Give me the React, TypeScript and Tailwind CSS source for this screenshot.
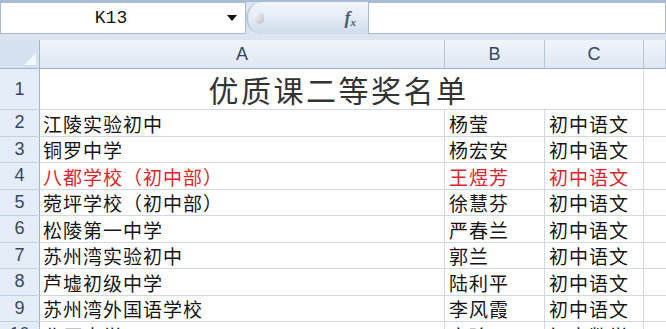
import React from 'react';

const cjk = { fontFamily: '"Noto Sans CJK SC", "Liberation Sans", sans-serif' };
const latin = { fontFamily: '"Liberation Sans", Arial, sans-serif' };

const rows = [
  { n: 2, school: '江陵实验初中', name: '杨莹', subject: '初中语文' },
  { n: 3, school: '铜罗中学', name: '杨宏安', subject: '初中语文' },
  { n: 4, school: '八都学校（初中部）', name: '王煜芳', subject: '初中语文', red: true },
  { n: 5, school: '菀坪学校（初中部）', name: '徐慧芬', subject: '初中语文' },
  { n: 6, school: '松陵第一中学', name: '严春兰', subject: '初中语文' },
  { n: 7, school: '苏州湾实验初中', name: '郭兰', subject: '初中语文' },
  { n: 8, school: '芦墟初级中学', name: '陆利平', subject: '初中语文' },
  { n: 9, school: '苏州湾外国语学校', name: '李风霞', subject: '初中语文' },
  { n: 10, school: '北厍中学', name: '宋玲', subject: '初中数学' },
];

const grid = 'grid grid-cols-[40px_405px_100px_99px_1fr]';

function FormulaBar() {
  return (
    <div className="h-[40px] bg-[#dbe5f1] border-t-2 border-[#a7bbd4]">
      <div className="flex h-[32px]">
        <div className="w-[246px] bg-white border border-[#aab9cc] flex items-center relative">
          <span className="flex-1 text-center text-[18px] text-[#111] pr-[6px]" style={{ fontFamily: '"Liberation Mono", "DejaVu Sans Mono", monospace' }}>
            K13
          </span>
          <svg width="10" height="6" viewBox="0 0 10 6" className="mr-[8px]">
            <path d="M0 0 L10 0 L5 6 Z" fill="#111" />
          </svg>
        </div>
        <div className="w-[122px] flex items-center bg-gradient-to-b from-[#f4f7fb] via-[#e3ebf5] to-[#cfdcec] rounded-l-[16px] border-l-2 border-[#b9c7d8]">
          <div className="w-[10px] h-[12px] ml-[6px] rounded-full bg-gradient-to-br from-[#ffffff] to-[#b8bcc4]" />
          <span className="ml-auto mr-[12px] text-[18px] italic text-[#4a5a70] font-semibold" style={{ fontFamily: '"Liberation Serif", serif' }}>
            f<sub className="text-[11px]">x</sub>
          </span>
        </div>
        <div className="flex-1 bg-white border border-[#aab9cc]" />
      </div>
    </div>
  );
}

function Header() {
  const cell = 'h-[28px] flex items-center justify-center border-r border-[#b6c6da] text-[18px] text-[#35475e] bg-gradient-to-b from-[#f1f5fa] to-[#dfe7f2]';
  return (
    <div className={`${grid} border-b border-[#9fb4cd]`} style={latin}>
      <div className="h-[28px] bg-[#d6e1ef] border-r border-[#9fb4cd] flex items-end justify-end p-[3px]">
        <svg width="12" height="12" viewBox="0 0 12 12">
          <path d="M12 0 L12 12 L0 12 Z" fill="#f3f6fa" />
        </svg>
      </div>
      <div className={cell}>A</div>
      <div className={cell}>B</div>
      <div className={cell}>C</div>
      <div className={cell} />
    </div>
  );
}

function RowNum({ n, h }: { n: number; h: string }) {
  return (
    <div className={`${h} flex items-center justify-center bg-[#e4ecf7] border-r border-b border-r-[#9fb4cd] border-b-[#c3d1e2] text-[18px] text-[#35475e]`} style={latin}>
      {n}
    </div>
  );
}

export default function App() {
  return (
    <div className="w-[666px] h-[329px] overflow-hidden bg-white">
      <FormulaBar />
      <Header />
      <div className={grid}>
        <RowNum n={1} h="h-[41px]" />
        <div className="col-span-3 h-[41px] flex items-center justify-center border-r border-b border-[#d0d7e5] text-[30px] text-[#333] tracking-[2.5px] pr-[6px]" style={cjk}>
          优质课二等奖名单
        </div>
        <div className="h-[41px] border-b border-[#d0d7e5]" />
        {rows.map((r) => {
          const color = r.red ? 'text-[#d8262b]' : 'text-[#151515]';
          const cell = `h-[26.5px] flex items-end pb-[1px] border-r border-b border-[#d0d7e5] text-[19px] leading-[22px] tracking-[1px] whitespace-nowrap overflow-hidden ${color}`;
          return (
            <React.Fragment key={r.n}>
              <RowNum n={r.n} h="h-[26.5px]" />
              <div className={`${cell} pl-[3px]`} style={cjk}>{r.school}</div>
              <div className={`${cell} pl-[4px]`} style={cjk}>{r.name}</div>
              <div className={`${cell} pl-[4px]`} style={cjk}>{r.subject}</div>
              <div className="h-[26.5px] border-b border-[#d0d7e5]" />
            </React.Fragment>
          );
        })}
      </div>
    </div>
  );
}
